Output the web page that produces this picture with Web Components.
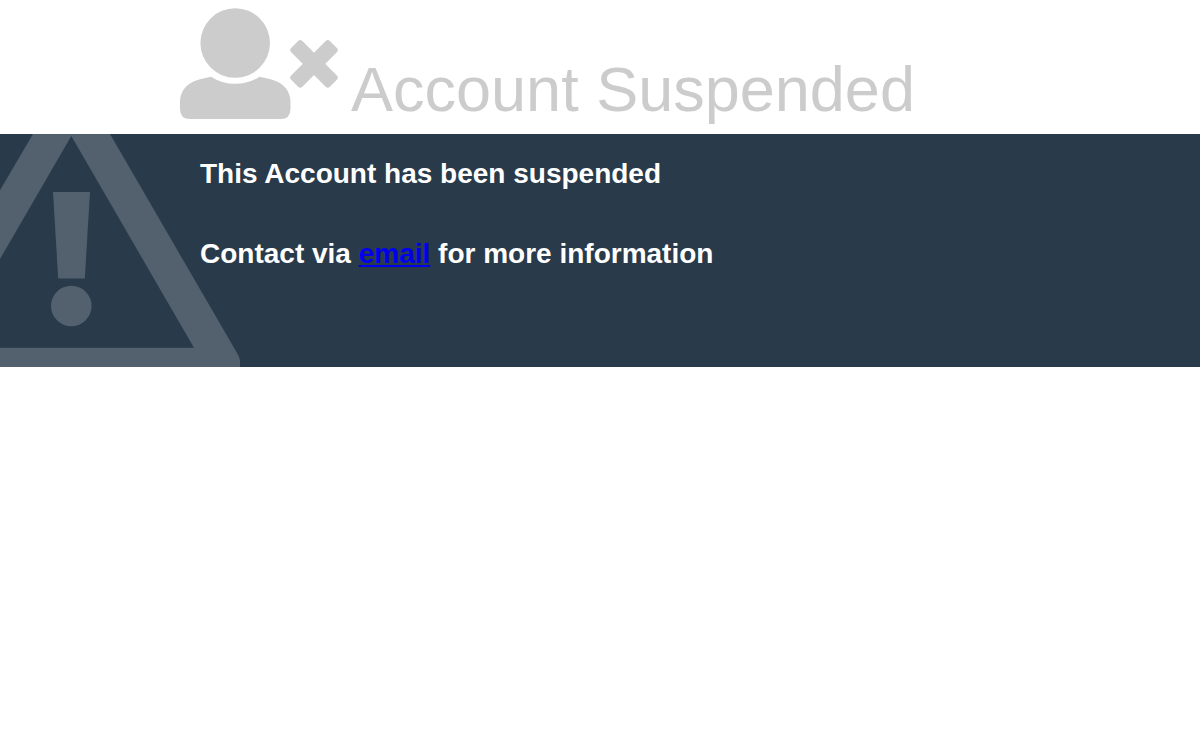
<!DOCTYPE html>
<html lang="en">
<head>
<meta charset="utf-8">
<meta name="viewport" content="width=device-width, initial-scale=1">
<title>Account Suspended</title>
<style>
  body { margin: 0; background: #fff; font-family: "Liberation Sans", Arial, Helvetica, sans-serif; }
</style>
</head>
<body>
<suspended-page></suspended-page>

<template id="user-times-icon">
  <style>
    :host { display: block; flex: none; width: 158px; height: 111px; }
    svg { display: block; width: 100%; height: 100%; fill: currentColor; }
  </style>
  <svg viewBox="0 0 158 111" aria-hidden="true">
    <circle cx="55.2" cy="35" r="34.8"/>
    <path d="M31 68.7Q42 75.8 55.3 75.8T79.500 68.700Q91 71 97 73.500C106 78 110.500 85 110.500 94V101Q110.500 111 100.500 111H10Q0 111 0 101V94C0 85 4.500 78 13.500 73.500Q19.500 71 31 68.700Z"/>
    <g transform="rotate(45 134 55.8)">
      <rect x="106.600" y="47.900" width="54.800" height="15.800" rx="3"/>
      <rect x="126.100" y="28.400" width="15.800" height="54.800" rx="3"/>
    </g>
  </svg>
</template>

<template id="warning-icon">
  <style>
    :host { display: block; width: 240px; height: 233px; }
    svg { display: block; width: 100%; height: 100%; fill: currentColor; }
  </style>
  <svg viewBox="0 0 240 233" aria-hidden="true">
    <path fill-rule="evenodd" d="M33 0H110L238.200 221Q240 224.500 240 228V233H-95V218L33 0ZM71.300 2L-51.400 213.700H194Z"/>
    <path d="M53 58H90L84.800 144.500H58.200Z"/>
    <circle cx="71.300" cy="172" r="20.300"/>
  </svg>
</template>

<template id="page-header">
  <style>
    :host { display: block; color: #ccc; }
    header { display: flex; align-items: flex-end; gap: 13px; margin: 0 15%; padding: 8px 0 15px; }
    h1 { margin: 0; font-size: 63px; line-height: 60px; font-weight: 400; white-space: nowrap; }
  </style>
  <header>
    <user-times-icon></user-times-icon>
    <h1><slot></slot></h1>
  </header>
</template>

<template id="notice-band">
  <style>
    :host { display: block; position: relative; overflow: hidden; background: #293a4a; color: #fff; }
    warning-icon { position: absolute; left: 0; top: 0; color: #53616e; }
    section { position: relative; display: grid; gap: 48px; margin: 0 15%; padding: 24px 20px 97px; }
  </style>
  <warning-icon></warning-icon>
  <section><slot></slot></section>
</template>

<template id="suspended-page">
  <style>
    :host { display: block; }
    h2 { margin: 0; font-size: 28px; line-height: 32px; font-weight: 700; }
    a { color: #00e; text-decoration: underline; }
  </style>
  <page-header>Account Suspended</page-header>
  <main>
    <notice-band>
      <h2>This Account has been suspended</h2>
      <h2>Contact via <a href="mailto:webmaster@localhost">email</a> for more information</h2>
    </notice-band>
  </main>
</template>

<script>
  class TemplateElement extends HTMLElement {
    constructor() {
      super();
      const template = document.getElementById(this.localName);
      this.attachShadow({ mode: "open" }).append(template.content.cloneNode(true));
    }
  }
  customElements.define("user-times-icon", class UserTimesIcon extends TemplateElement {});
  customElements.define("warning-icon", class WarningIcon extends TemplateElement {});
  customElements.define("page-header", class PageHeader extends TemplateElement {});
  customElements.define("notice-band", class NoticeBand extends TemplateElement {});
  customElements.define("suspended-page", class SuspendedPage extends TemplateElement {});
</script>
</body>
</html>
